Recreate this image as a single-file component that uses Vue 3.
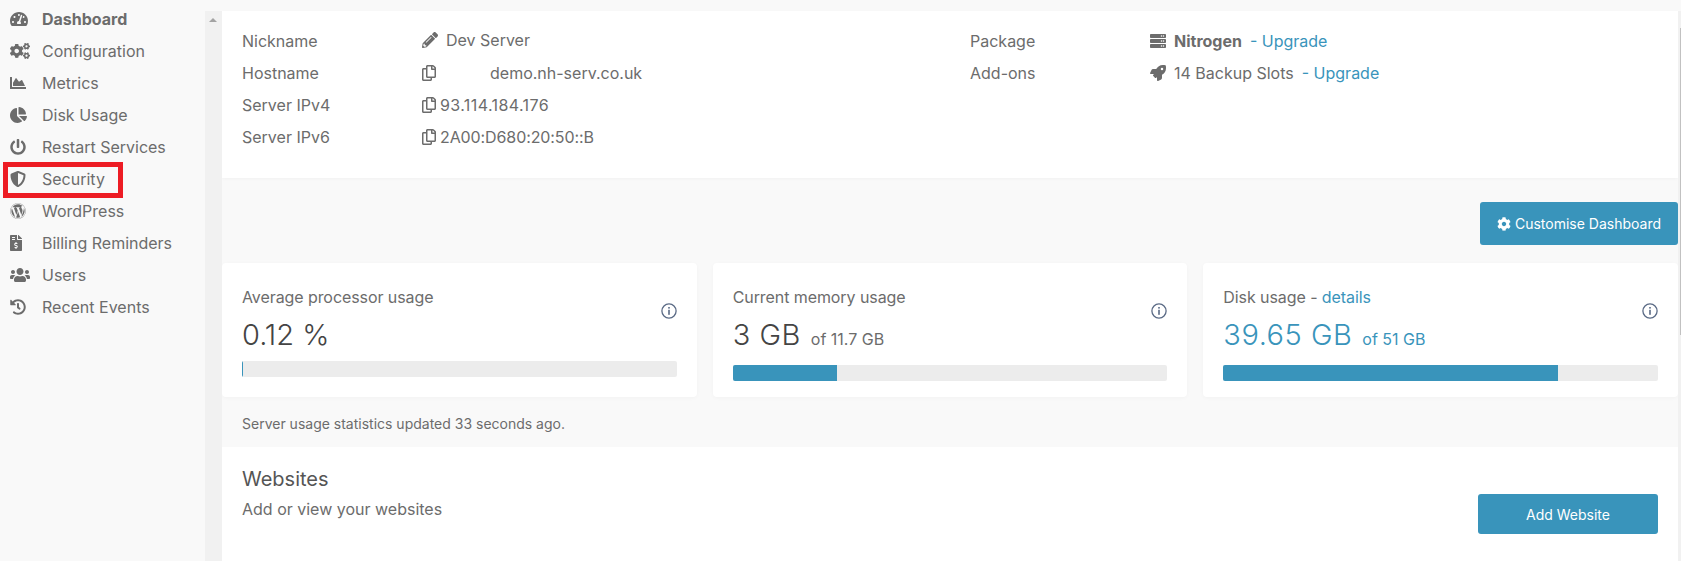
<script setup>
const icons = {
  tachometer: { vb: '0 0 576 512', d: 'M288 32C128.94 32 0 160.94 0 320c0 52.8 14.25 102.26 39.06 144.8 5.61 9.62 16.3 15.2 27.44 15.2h443c11.14 0 21.83-5.58 27.44-15.2C561.75 422.26 576 372.8 576 320c0-159.06-128.94-288-288-288zm0 64c14.71 0 26.58 10.13 30.32 23.65-1.11 2.26-2.64 4.23-3.45 6.67l-9.22 27.67c-5.13 3.49-10.97 6.01-17.64 6.01-17.67 0-32-14.33-32-32S270.33 96 288 96zM96 384c-17.67 0-32-14.33-32-32s14.33-32 32-32 32 14.33 32 32-14.33 32-32 32zm48-160c-17.67 0-32-14.33-32-32s14.33-32 32-32 32 14.33 32 32-14.33 32-32 32zm246.77-72.41l-61.33 184C343.13 347.33 352 364.54 352 384c0 11.72-3.38 22.55-8.88 32H232.88c-5.5-9.45-8.88-20.28-8.88-32 0-33.94 26.5-61.43 59.9-63.59l61.34-184.01c4.17-12.56 17.73-19.45 30.36-15.17 12.57 4.19 19.35 17.79 15.17 30.36zm14.66 57.2l15.52-46.55c3.47-1.29 7.13-2.23 11.05-2.23 17.67 0 32 14.33 32 32s-14.33 32-32 32c-11.38-.01-20.89-6.28-26.57-15.22zM480 384c-17.67 0-32-14.33-32-32s14.33-32 32-32 32 14.33 32 32-14.33 32-32 32z' },
  cogs: { vb: '0 0 640 512', d: 'M512.1 191l-8.2 14.3c-3 5.3-9.4 7.5-15.1 5.4-11.8-4.4-22.6-10.7-32.1-18.6-4.6-3.8-5.8-10.5-2.8-15.7l8.2-14.3c-6.9-8-12.3-17.3-15.9-27.4h-16.5c-6 0-11.2-4.3-12.2-10.3-2-12-2.1-24.6 0-37.1 1-6 6.2-10.4 12.2-10.4h16.5c3.6-10.1 9-19.4 15.9-27.4l-8.2-14.3c-3-5.2-1.9-11.9 2.8-15.7 9.5-7.9 20.4-14.2 32.1-18.6 5.7-2.1 12.1.1 15.1 5.4l8.2 14.3c10.5-1.9 21.2-1.9 31.7 0L552 6.3c3-5.3 9.4-7.5 15.1-5.4 11.8 4.4 22.6 10.7 32.1 18.6 4.6 3.8 5.8 10.5 2.8 15.7l-8.2 14.3c6.9 8 12.3 17.3 15.9 27.4h16.5c6 0 11.2 4.3 12.2 10.3 2 12 2.1 24.6 0 37.1-1 6-6.2 10.4-12.2 10.4h-16.5c-3.6 10.1-9 19.4-15.9 27.4l8.2 14.3c3 5.2 1.9 11.9-2.8 15.7-9.5 7.9-20.4 14.2-32.1 18.6-5.7 2.1-12.1-.1-15.1-5.4l-8.2-14.3c-10.4 1.9-21.2 1.9-31.7 0zm-10.5-58.8c38.5 29.6 82.4-14.3 52.8-52.8-38.5-29.7-82.4 14.3-52.8 52.8zM386.3 286.1l33.7 16.8c10.1 5.8 14.5 18.1 10.5 29.1-8.9 24.2-26.4 46.4-42.6 65.8-7.4 8.9-20.2 11.1-30.3 5.3l-29.1-16.8c-16 13.7-34.6 24.6-54.9 31.7v33.6c0 11.6-8.3 21.6-19.7 23.6-24.6 4.2-50.4 4.4-75.9 0-11.5-2-20-11.9-20-23.6V418c-20.3-7.2-38.9-18-54.9-31.7L74 403c-10 5.8-22.9 3.6-30.3-5.3-16.2-19.4-33.3-41.6-42.2-65.7-4-10.9.4-23.2 10.5-29.1l33.3-16.8c-3.9-20.9-3.9-42.4 0-63.4L12 205.8c-10.1-5.8-14.6-18.1-10.5-29 8.9-24.2 26-46.4 42.2-65.8 7.4-8.9 20.2-11.1 30.3-5.3l29.1 16.8c16-13.7 34.6-24.6 54.9-31.7V57.1c0-11.5 8.2-21.5 19.6-23.5 24.6-4.2 50.5-4.4 76-.1 11.5 2 20 11.9 20 23.6v33.6c20.3 7.2 38.9 18 54.9 31.7l29.1-16.8c10-5.8 22.9-3.6 30.3 5.3 16.2 19.4 33.2 41.6 42.1 65.8 4 10.9.1 23.2-10 29.1l-33.7 16.8c3.9 21 3.9 42.5 0 63.5zm-117.6 21.1c59.2-77-28.7-164.9-105.7-105.7-59.2 77 28.7 164.9 105.7 105.7zm243.4 182.7l-8.2 14.3c-3 5.3-9.4 7.5-15.1 5.4-11.8-4.4-22.6-10.7-32.1-18.6-4.6-3.8-5.8-10.5-2.8-15.7l8.2-14.3c-6.9-8-12.3-17.3-15.9-27.4h-16.5c-6 0-11.2-4.3-12.2-10.3-2-12-2.1-24.6 0-37.1 1-6 6.2-10.4 12.2-10.4h16.5c3.6-10.1 9-19.4 15.9-27.4l-8.2-14.3c-3-5.2-1.9-11.9 2.8-15.7 9.5-7.9 20.4-14.2 32.1-18.6 5.7-2.1 12.1.1 15.1 5.4l8.2 14.3c10.5-1.9 21.2-1.9 31.7 0l8.2-14.3c3-5.3 9.4-7.5 15.1-5.4 11.8 4.4 22.6 10.7 32.1 18.6 4.6 3.8 5.8 10.5 2.8 15.7l-8.2 14.3c6.9 8 12.3 17.3 15.9 27.4h16.5c6 0 11.2 4.3 12.2 10.3 2 12 2.1 24.6 0 37.1-1 6-6.2 10.4-12.2 10.4h-16.5c-3.6 10.1-9 19.4-15.9 27.4l8.2 14.3c3 5.2 1.9 11.9-2.8 15.7-9.5 7.9-20.4 14.2-32.1 18.6-5.7 2.1-12.1-.1-15.1-5.4l-8.2-14.3c-10.4 1.9-21.2 1.9-31.7 0zM501.6 431c38.5 29.6 82.4-14.3 52.8-52.8-38.5-29.6-82.4 14.3-52.8 52.8z' },
  area: { vb: '0 0 512 512', d: 'M500 384c6.6 0 12 5.4 12 12v40c0 6.6-5.4 12-12 12H12c-6.6 0-12-5.4-12-12V76c0-6.6 5.4-12 12-12h40c6.6 0 12 5.4 12 12v308h436zM372.7 159.5L288 216l-85.3-113.7c-5.1-6.8-15.5-6.3-19.9 1L96 248v104h384l-89.9-187.8c-3.2-6.5-11.4-8.7-17.4-4.7z' },
  pie: { vb: '0 0 544 512', d: 'M527.79 288H290.5l158.03 158.03c6.04 6.04 15.98 6.53 22.19.68 38.7-36.46 65.32-85.61 73.13-140.86 1.34-9.46-6.51-17.85-16.06-17.85zm-15.83-64.8C503.72 103.74 408.26 8.28 288.8.04 279.68-.59 272 7.1 272 16.24V240h223.77c9.14 0 16.82-7.68 16.19-16.8zM224 288V50.71c0-9.55-8.39-17.4-17.84-16.06C86.99 51.49-4.1 155.6.14 280.37 4.5 408.51 114.83 513.59 243.03 511.98c50.4-.63 96.97-16.87 135.26-44.03 7.9-5.6 8.42-17.23 1.57-24.08L224 288z' },
  power: { vb: '0 0 512 512', d: 'M400 54.1c63 45 104 118.6 104 201.9 0 136.8-110.8 247.7-247.5 248C120 504.3 8.2 393 8 256.4 7.9 173.1 48.9 99.3 111.8 54.2c11.7-8.3 28-4.8 35 7.7L162.6 90c5.9 10.5 3.1 23.8-6.6 31-41.5 30.8-68 79.6-68 134.9-.1 92.3 74.5 168.1 168 168.1 91.6 0 168.6-74.2 168-169.1-.3-51.8-24.7-101.8-68.1-134-9.7-7.2-12.4-20.5-6.5-30.9l15.8-28.1c7-12.4 23.2-16.1 34.8-7.8zM296 264V24c0-13.3-10.7-24-24-24h-32c-13.3 0-24 10.7-24 24v240c0 13.3 10.7 24 24 24h32c13.3 0 24-10.7 24-24z' },
  shield: { vb: '0 0 512 512', d: 'M466.5 83.7l-192-80a48.15 48.15 0 0 0-36.9 0l-192 80C27.7 91.1 16 108.6 16 128c0 198.5 114.5 335.7 221.5 380.3 11.8 4.9 25.1 4.9 36.9 0C360.1 472.6 496 349.3 496 128c0-19.4-11.7-36.9-29.5-44.3zM256.1 446.3l-.1-381 175.9 73.3c-3.3 151.4-82.1 261.1-175.8 307.7z' },
  wordpress: { vb: '0 0 512 512', d: 'M61.7 169.4l101.5 278C92.2 413 43.3 340.2 43.3 256c0-30.9 6.6-60.1 18.4-86.6zm337.9 75.9c0-26.3-9.4-44.5-17.5-58.7-10.8-17.5-20.9-32.4-20.9-49.9 0-19.6 14.8-37.8 35.7-37.8.9 0 1.8.1 2.8.2-37.9-34.7-88.3-55.9-143.7-55.9-74.3 0-139.7 38.1-177.8 95.9 5 .2 9.7.3 13.7.3 22.2 0 56.7-2.7 56.7-2.7 11.5-.7 12.8 16.2 1.4 17.5 0 0-11.5 1.3-24.3 2l77.5 230.4L249.8 247l-33.1-90.8c-11.5-.7-22.3-2-22.3-2-11.5-.7-10.1-18.2 1.3-17.5 0 0 35.1 2.7 56 2.7 22.2 0 56.7-2.7 56.7-2.7 11.5-.7 12.8 16.2 1.4 17.5 0 0-11.5 1.3-24.3 2l76.9 228.7 21.2-70.9c9-29.4 16-50.5 16-68.7zm-139.9 29.4l-63.8 185.5c19.1 5.6 39.2 8.7 60.1 8.7 24.8 0 48.5-4.3 70.6-12.1-.6-.9-1.1-1.9-1.5-2.9l-65.4-179.2zm183-120.7c.9 6.8 1.4 14 1.4 21.9 0 21.6-4 45.8-16.2 76.2l-65 187.9C426.2 403 468.7 334.5 468.7 256c0-37-9.4-71.8-26-102.1zM504 256c0 136.8-111.3 248-248 248C119.2 504 8 392.7 8 256 8 119.2 119.2 8 256 8c136.7 0 248 111.2 248 248zm-11.4 0c0-130.5-106.2-236.6-236.6-236.6C125.5 19.4 19.4 125.5 19.4 256S125.6 492.6 256 492.6c130.5 0 236.6-106.1 236.6-236.6z' },
  invoice: { vb: '0 0 384 512', d: 'M377 105L279.1 7c-4.5-4.5-10.6-7-17-7H256v128h128v-6.1c0-6.3-2.5-12.4-7-16.9zm-153 31V0H24C10.7 0 0 10.7 0 24v464c0 13.3 10.7 24 24 24h336c13.3 0 24-10.7 24-24V160H248c-13.2 0-24-10.8-24-24zM64 72c0-4.42 3.58-8 8-8h80c4.42 0 8 3.58 8 8v16c0 4.42-3.58 8-8 8H72c-4.42 0-8-3.58-8-8V72zm0 80v-16c0-4.42 3.58-8 8-8h80c4.42 0 8 3.58 8 8v16c0 4.42-3.58 8-8 8H72c-4.42 0-8-3.58-8-8zm144 263.88V440c0 4.42-3.58 8-8 8h-16c-4.42 0-8-3.58-8-8v-24.29c-11.29-.58-22.27-4.52-31.37-11.35-3.9-2.93-4.1-8.77-.57-12.14l11.75-11.21c2.77-2.64 6.89-2.76 10.13-.73 3.87 2.42 8.26 3.72 12.82 3.72h28.11c6.5 0 11.8-5.92 11.8-13.19 0-5.95-3.61-11.19-8.77-12.73l-45-13.5c-18.59-5.58-31.58-23.42-31.58-43.39 0-24.52 19.05-44.44 42.67-45.07V232c0-4.42 3.58-8 8-8h16c4.42 0 8 3.58 8 8v24.29c11.29.58 22.27 4.51 31.37 11.35 3.9 2.93 4.1 8.77.57 12.14l-11.75 11.21c-2.77 2.64-6.89 2.76-10.13.73-3.87-2.43-8.26-3.72-12.82-3.72h-28.11c-6.5 0-11.8 5.92-11.8 13.19 0 5.95 3.61 11.19 8.77 12.73l45 13.5c18.59 5.58 31.58 23.42 31.58 43.39 0 24.53-19.05 44.44-42.67 45.07z' },
  users: { vb: '0 0 640 512', d: 'M96 224c35.3 0 64-28.7 64-64s-28.7-64-64-64-64 28.7-64 64 28.7 64 64 64zm448 0c35.3 0 64-28.7 64-64s-28.7-64-64-64-64 28.7-64 64 28.7 64 64 64zm32 32h-64c-17.6 0-33.5 7.1-45.1 18.6 40.3 22.1 68.9 62 75.1 109.4h66c17.7 0 32-14.3 32-32v-32c0-35.3-28.7-64-64-64zm-256 0c61.9 0 112-50.1 112-112S381.9 32 320 32 208 82.1 208 144s50.1 112 112 112zm76.8 32h-8.3c-20.8 10-43.9 16-68.5 16s-47.6-6-68.5-16h-8.3C179.6 288 128 339.6 128 403.2V432c0 26.5 21.5 48 48 48h288c26.5 0 48-21.5 48-48v-28.8c0-63.6-51.6-115.2-115.2-115.2zm-223.7-13.4C161.5 263.1 145.6 256 128 256H64c-35.3 0-64 28.7-64 64v32c0 17.7 14.3 32 32 32h65.9c6.3-47.4 34.9-87.3 75.2-109.4z' },
  history: { vb: '0 0 512 512', d: 'M504 255.531c.253 136.64-111.18 248.372-247.82 248.468-59.015.042-113.223-20.53-155.822-54.911-11.077-8.94-11.905-25.541-1.839-35.607l11.267-11.267c8.609-8.609 22.353-9.551 31.891-1.984C173.062 425.135 212.781 440 256 440c101.705 0 184-82.311 184-184 0-101.705-82.311-184-184-184-48.814 0-93.149 18.969-126.068 49.932l50.754 50.754c10.08 10.08 2.941 27.314-11.313 27.314H24c-8.837 0-16-7.163-16-16V38.627c0-14.254 17.234-21.393 27.314-11.314l49.372 49.372C129.209 34.136 189.552 8 256 8c136.81 0 247.747 110.78 248 247.531zm-180.912 78.784l9.823-12.63c8.138-10.463 6.253-25.542-4.21-33.679L288 256.349V152c0-13.255-10.745-24-24-24h-16c-13.255 0-24 10.745-24 24v135.651l65.409 50.874c10.463 8.137 25.541 6.253 33.679-4.21z' },
  pencil: { vb: '0 0 512 512', d: 'M497.9 142.1l-46.1 46.1c-4.7 4.7-12.3 4.7-17 0l-111-111c-4.7-4.7-4.7-12.3 0-17l46.1-46.1c18.7-18.7 49.1-18.7 67.9 0l60.1 60.1c18.8 18.7 18.8 49.1 0 67.9zM284.2 99.8L21.6 362.4.4 483.9c-2.9 16.4 11.4 30.6 27.8 27.8l121.5-21.3 262.6-262.6c4.7-4.7 4.7-12.3 0-17l-111-111c-4.8-4.7-12.4-4.7-17.1 0zM124.1 339.9c-5.5-5.5-5.5-14.3 0-19.8l154-154c5.5-5.5 14.3-5.5 19.8 0s5.5 14.3 0 19.8l-154 154c-5.5 5.5-14.3 5.5-19.8 0zM88 424h48v36.3l-64.5 11.3-31.1-31.1L51.7 376H88v48z' },
  copy: { vb: '0 0 448 512', d: 'M433.941 65.941l-51.882-51.882A48 48 0 0 0 348.118 0H176c-26.51 0-48 21.49-48 48v48H48c-26.51 0-48 21.49-48 48v320c0 26.51 21.49 48 48 48h224c26.51 0 48-21.49 48-48v-48h80c26.51 0 48-21.49 48-48V99.882a48 48 0 0 0-14.059-33.941zM266 464H54a6 6 0 0 1-6-6V150a6 6 0 0 1 6-6h74v224c0 26.51 21.49 48 48 48h96v42a6 6 0 0 1-6 6zm128-96H182a6 6 0 0 1-6-6V54a6 6 0 0 1 6-6h106v88c0 13.255 10.745 24 24 24h88v202a6 6 0 0 1-6 6zm6-256h-64V48h9.632c1.591 0 3.117.632 4.243 1.757l48.368 48.368a6 6 0 0 1 1.757 4.243V112z' },
  server: { vb: '0 0 512 512', d: 'M480 160H32c-17.673 0-32-14.327-32-32V64c0-17.673 14.327-32 32-32h448c17.673 0 32 14.327 32 32v64c0 17.673-14.327 32-32 32zm-48-88c-13.255 0-24 10.745-24 24s10.745 24 24 24 24-10.745 24-24-10.745-24-24-24zm-64 0c-13.255 0-24 10.745-24 24s10.745 24 24 24 24-10.745 24-24-10.745-24-24-24zm112 248H32c-17.673 0-32-14.327-32-32v-64c0-17.673 14.327-32 32-32h448c17.673 0 32 14.327 32 32v64c0 17.673-14.327 32-32 32zm-48-88c-13.255 0-24 10.745-24 24s10.745 24 24 24 24-10.745 24-24-10.745-24-24-24zm-64 0c-13.255 0-24 10.745-24 24s10.745 24 24 24 24-10.745 24-24-10.745-24-24-24zm112 248H32c-17.673 0-32-14.327-32-32v-64c0-17.673 14.327-32 32-32h448c17.673 0 32 14.327 32 32v64c0 17.673-14.327 32-32 32zm-48-88c-13.255 0-24 10.745-24 24s10.745 24 24 24 24-10.745 24-24-10.745-24-24-24zm-64 0c-13.255 0-24 10.745-24 24s10.745 24 24 24 24-10.745 24-24-10.745-24-24-24z' },
  rocket: { vb: '0 0 512 512', d: 'M505.12019,19.09375c-1.18945-5.53125-6.65819-11-12.207-12.1875C460.716,0,435.507,0,410.40747,0,307.17523,0,245.26909,55.20312,199.05238,128H94.83772c-16.34763.01562-35.55658,11.875-42.88664,26.48438L2.51562,253.29688A28.4,28.4,0,0,0,0,264a24.00867,24.00867,0,0,0,24.00582,24H127.81618l-22.47457,22.46875c-11.36521,11.36133-12.99607,32.25781,0,45.25L156.24582,406.625c11.15623,11.1875,32.15619,13.15625,45.27726,0l22.47457-22.46875V488a24.00867,24.00867,0,0,0,24.00581,24,28.55934,28.55934,0,0,0,10.707-2.51562l98.72834-49.39063c14.62888-7.29687,26.50776-26.5,26.50776-42.85937V312.79688c72.59753-46.3125,128.03493-108.40626,128.03493-211.09376C512.07526,76.5,512.07526,51.29688,505.12019,19.09375ZM384.04033,168A40,40,0,1,1,424.05,128,40.02322,40.02322,0,0,1,384.04033,168Z' },
  cog: { vb: '0 0 512 512', d: 'M487.4 315.7l-42.6-24.6c4.3-23.2 4.3-47 0-70.2l42.6-24.6c4.9-2.8 7.1-8.6 5.5-14-11.1-35.6-30-67.8-54.7-94.6-3.8-4.1-10-5.1-14.8-2.3L380.8 110c-17.9-15.4-38.5-27.3-60.8-35.1V25.8c0-5.6-3.9-10.5-9.4-11.7-36.7-8.2-74.3-7.8-109.2 0-5.5 1.2-9.4 6.1-9.4 11.7V75c-22.2 7.9-42.8 19.8-60.8 35.1L88.7 85.5c-4.9-2.8-11-1.9-14.8 2.3-24.7 26.7-43.6 58.9-54.7 94.6-1.7 5.4.6 11.2 5.5 14L67.3 221c-4.3 23.2-4.3 47 0 70.2l-42.6 24.6c-4.9 2.8-7.1 8.6-5.5 14 11.1 35.6 30 67.8 54.7 94.6 3.8 4.1 10 5.1 14.8 2.3l42.6-24.6c17.9 15.4 38.5 27.3 60.8 35.1v49.2c0 5.6 3.9 10.5 9.4 11.7 36.7 8.2 74.3 7.8 109.2 0 5.5-1.2 9.4-6.1 9.4-11.7v-49.2c22.2-7.9 42.8-19.8 60.8-35.1l42.6 24.6c4.9 2.8 11 1.9 14.8-2.3 24.7-26.7 43.6-58.9 54.7-94.6 1.5-5.5-.7-11.3-5.6-14.1zM256 336c-44.1 0-80-35.9-80-80s35.9-80 80-80 80 35.9 80 80-35.9 80-80 80z' }
}

const nav = [
  { label: 'Dashboard', icon: 'tachometer', active: true },
  { label: 'Configuration', icon: 'cogs' },
  { label: 'Metrics', icon: 'area' },
  { label: 'Disk Usage', icon: 'pie' },
  { label: 'Restart Services', icon: 'power' },
  { label: 'Security', icon: 'shield', marked: true },
  { label: 'WordPress', icon: 'wordpress' },
  { label: 'Billing Reminders', icon: 'invoice' },
  { label: 'Users', icon: 'users' },
  { label: 'Recent Events', icon: 'history' }
]

const stats = [
  { title: 'Average processor usage', value: '0.12 %', pct: 0.25, plain: true },
  { title: 'Current memory usage', value: '3 GB', of: 'of 11.7 GB', pct: 24 },
  { title: 'Disk usage - ', link: 'details', value: '39.65 GB', of: 'of 51 GB', pct: 77, accent: true }
]
</script>

<template>
  <div class="page">
    <aside class="sidebar">
      <nav class="nav">
        <a v-for="item in nav" :key="item.label" class="nav-item" :class="{ active: item.active, marked: item.marked }">
          <span class="nav-icon">
            <svg :viewBox="icons[item.icon].vb" class="nav-svg"><path :d="icons[item.icon].d" /></svg>
          </span>
          <span>{{ item.label }}</span>
        </a>
      </nav>
    </aside>
    <div class="track"><span class="arrow"></span></div>
    <main class="main">
      <section class="summary">
        <div class="info-col left">
          <div class="info-row">
            <span class="info-label">Nickname</span>
            <span class="info-value lifted"><svg :viewBox="icons.pencil.vb" class="val-icon gap"><path :d="icons.pencil.d" /></svg>Dev Server</span>
          </div>
          <div class="info-row">
            <span class="info-label">Hostname</span>
            <span class="info-value"><svg :viewBox="icons.copy.vb" class="val-icon copy"><path :d="icons.copy.d" /></svg><span class="host">demo.nh-serv.co.uk</span></span>
          </div>
          <div class="info-row">
            <span class="info-label">Server IPv4</span>
            <span class="info-value"><svg :viewBox="icons.copy.vb" class="val-icon copy"><path :d="icons.copy.d" /></svg><span class="ip4">93.114.184.176</span></span>
          </div>
          <div class="info-row">
            <span class="info-label">Server IPv6</span>
            <span class="info-value"><svg :viewBox="icons.copy.vb" class="val-icon copy"><path :d="icons.copy.d" /></svg><span class="ip6">2A00:D680:20:50::B</span></span>
          </div>
        </div>
        <div class="info-col right">
          <div class="info-row">
            <span class="info-label">Package</span>
            <span class="info-value"><svg :viewBox="icons.server.vb" class="val-icon gap"><path :d="icons.server.d" /></svg><b class="pkg">Nitrogen</b><a class="link up">- Upgrade</a></span>
          </div>
          <div class="info-row">
            <span class="info-label">Add-ons</span>
            <span class="info-value"><svg :viewBox="icons.rocket.vb" class="val-icon gap"><path :d="icons.rocket.d" /></svg>14 Backup Slots<a class="link up">- Upgrade</a></span>
          </div>
        </div>
      </section>

      <div class="toolbar">
        <button class="btn customise"><svg :viewBox="icons.cog.vb" class="btn-icon"><path :d="icons.cog.d" /></svg>Customise Dashboard</button>
      </div>

      <div class="stats">
        <div v-for="s in stats" :key="s.title" class="stat">
          <div class="stat-head">
            <div class="stat-text">
              <div class="stat-title">{{ s.title }}<a v-if="s.link" class="link">{{ s.link }}</a></div>
              <div class="stat-value" :class="{ accent: s.accent, plain: s.plain }">{{ s.value }}<span v-if="s.of" class="stat-of">{{ s.of }}</span></div>
            </div>
            <svg viewBox="0 0 16 16" class="info-icon">
              <circle cx="8" cy="8" r="7.1" fill="none" stroke="#5a6a85" stroke-width="1.3" />
              <rect x="7.2" y="6.8" width="1.6" height="5" fill="#5a6a85" />
              <rect x="7.2" y="4" width="1.6" height="1.6" fill="#5a6a85" />
            </svg>
          </div>
          <div class="bar"><div class="bar-fill" :style="{ width: s.pct + '%' }"></div></div>
        </div>
      </div>

      <p class="updated">Server usage statistics updated 33 seconds ago.</p>

      <section class="websites">
        <div>
          <h2 class="web-title">Websites</h2>
          <p class="web-sub">Add or view your websites</p>
        </div>
        <button class="btn add">Add Website</button>
      </section>
    </main>
    <div class="edge"><span class="thumb"></span></div>
  </div>
</template>

<style>
html, body { margin: 0; background: #f9f9f9; overflow: hidden; }
</style>

<style scoped>
.page {
  display: flex;
  width: 1681px;
  height: 561px;
  overflow: hidden;
  padding-top: 11px;
  box-sizing: border-box;
  font-family: Inter, "Liberation Sans", sans-serif;
  font-size: 16px;
  color: #6c6c6c;
  background: #f9f9f9;
  position: relative;
}
.sidebar { width: 205px; flex: none; background: #f9f9f9; }
.nav { display: flex; flex-direction: column; margin-top: -8px; }
.nav-item { display: flex; align-items: center; height: 32px; padding-left: 10px; box-sizing: border-box; }
.nav-item.active { font-weight: 700; }
.nav-item.marked { position: relative; }
.nav-item.marked::after {
  content: "";
  position: absolute;
  left: 3px;
  top: -1px;
  width: 120px;
  height: 36px;
  box-sizing: border-box;
  border: 5px solid #ed1c24;
}
.nav-icon { width: 32px; flex: none; display: flex; }
.nav-svg { height: 16px; fill: #6c6c6c; }
.track { width: 17px; flex: none; background: #f1f1f1; position: relative; }
.arrow {
  position: absolute;
  left: 4px;
  top: 7px;
  border-left: 4px solid transparent;
  border-right: 4px solid transparent;
  border-bottom: 4px solid #a3a3a3;
}
.main { width: 1456px; flex: none; display: flex; flex-direction: column; }
.edge { flex: 1; background: #f1f1f1; position: relative; }
.thumb {
  position: absolute;
  right: 0;
  top: 17px;
  width: 1px;
  height: 307px;
  background: #c1c1c1;
}
.summary {
  display: flex;
  background: #fff;
  height: 167px;
  flex: none;
  box-sizing: border-box;
  padding: 14px 20px 0;
  box-shadow: 0 1px 3px rgba(0, 0, 0, 0.03);
}
.info-col.left { width: 728px; }
.info-row { display: flex; align-items: center; height: 32px; }
.info-label { width: 180px; flex: none; }
.info-value { display: flex; align-items: center; }
.info-value.lifted { margin-top: -2px; }
.val-icon { height: 16px; fill: #6c6c6c; flex: none; }
.val-icon.gap { margin-right: 8px; }
.val-icon.copy { margin-right: 4px; }
.host { margin-left: 50px; }
.ip4 { letter-spacing: 0.4px; }
.ip6 { letter-spacing: -0.1px; }
.pkg { font-weight: 700; }
.link { color: #3994bb; }
.up { margin-left: 8px; }
.toolbar { display: flex; justify-content: flex-end; padding-top: 24px; }
.btn {
  border: none;
  background: #3994bb;
  color: #fff;
  font: inherit;
  font-size: 14px;
  border-radius: 3px;
  display: flex;
  align-items: center;
  justify-content: center;
}
.customise { width: 198px; height: 43px; }
.btn-icon { width: 14px; height: 14px; fill: #fff; margin-right: 4px; }
.stats { display: flex; gap: 16px; margin-top: 18px; }
.stat {
  flex: 1;
  height: 134px;
  box-sizing: border-box;
  background: #fff;
  border-radius: 4px;
  padding: 24px 20px 0;
  box-shadow: 0 1px 4px rgba(0, 0, 0, 0.03);
}
.stat-head { display: flex; justify-content: space-between; }
.stat-title { line-height: 20px; letter-spacing: -0.08px; }
.stat-value {
  font-size: 29px;
  font-weight: 300;
  line-height: 34px;
  color: #444;
  margin-top: 11px;
  letter-spacing: 0.5px;
}
.stat-value.plain { letter-spacing: 0; }
.stat-value.accent { color: #3994bb; }
.stat-value.accent .stat-of { color: #3994bb; }
.stat-of { font-size: 16px; font-weight: 400; margin-left: 10px; color: #6c6c6c; letter-spacing: 0; }
.info-icon { width: 16px; height: 16px; flex: none; margin-top: 16px; }
.bar { height: 16px; background: #ececec; border-radius: 2px; margin-top: 9px; overflow: hidden; }
.bar-fill { height: 100%; background: #3994bb; }
.updated { margin: 0; height: 50px; line-height: 54px; padding-left: 20px; font-size: 14px; }
.websites {
  background: #fff;
  flex: 1;
  display: flex;
  justify-content: space-between;
  padding: 20px 20px 0;
}
.web-title { margin: 0; font-size: 20px; font-weight: 400; color: #555; line-height: 24px; }
.web-sub { margin: 8px 0 0; line-height: 20px; }
.add { width: 180px; height: 40px; margin-top: 27px; }
</style>
